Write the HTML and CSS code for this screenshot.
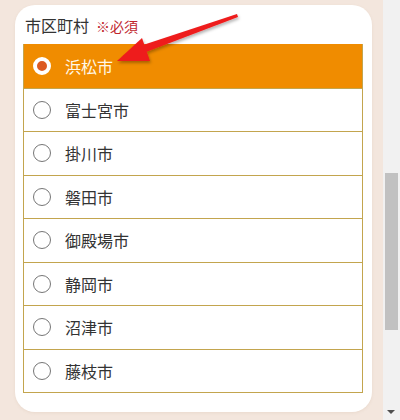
FILE: index.html
```html
<!DOCTYPE html>
<html>
  <head>
    <meta charset="UTF-8">
    <title>市区町村</title>
    <link rel="stylesheet" href="styles.css">
  </head>
  <body>
    <div class="page">
      <div class="main">
        <div class="card">
          <div class="label">市区町村<span class="req">※必須</span></div>
          <ul class="list">
            <li class="item on"><span class="radio"></span>浜松市</li>
            <li class="item"><span class="radio"></span>富士宮市</li>
            <li class="item"><span class="radio"></span>掛川市</li>
            <li class="item"><span class="radio"></span>磐田市</li>
            <li class="item"><span class="radio"></span>御殿場市</li>
            <li class="item"><span class="radio"></span>静岡市</li>
            <li class="item"><span class="radio"></span>沼津市</li>
            <li class="item"><span class="radio"></span>藤枝市</li>
          </ul>
        </div>
      </div>
      <div class="scrollbar">
        <div class="thumb"></div>
        <div class="arrow"></div>
      </div>

      <!-- 注釈の矢印 -->
      <svg class="pointer" width="400" height="420" viewBox="0 0 400 420">
        <defs>
          <filter id="sh" x="-20%" y="-20%" width="140%" height="160%">
            <feDropShadow dx="1" dy="2" stdDeviation="1.5" flood-color="#000" flood-opacity="0.3"/>
          </filter>
        </defs>
        <g filter="url(#sh)" fill="#ee1c1c">
          <polygon points="237,14 238,17 146,52 143,45"/>
          <polygon points="117,61 142,38 150,61"/>
        </g>
      </svg>
    </div>
  </body>
</html>
```

FILE: styles.css
```css
* {
  margin: 0;
  padding: 0;
  box-sizing: border-box;
}

body {
  font-family: "Noto Sans CJK JP", "Liberation Sans", sans-serif;
  color: #333;
}

.page {
  position: relative;
  display: flex;
  width: 400px;
  height: 420px;
  overflow: hidden;
}

.main {
  flex: 1;
  background: #f3e6dd;
  padding: 5px 11px 0 15px;
}

.card {
  height: 407px;
  background: #fff;
  border-radius: 20px;
  padding: 7px 9px 0 8px;
  box-shadow: 0 1px 3px rgba(180, 150, 120, 0.15);
}

.label {
  font-size: 16px;
  line-height: 26px;
  margin-bottom: 5px;
  padding-left: 2px;
  color: #333;
}

.req {
  font-size: 14px;
  color: #c0262d;
  margin-left: 7px;
}

.list {
  list-style: none;
  border: 1px solid #c3a54e;
  border-top: 0;
}

.item {
  display: flex;
  align-items: center;
  height: 43.5px;
  border-top: 1px solid #c3a54e;
  font-size: 16px;
  color: #333;
  padding-left: 9px;
}

.item:first-child {
  border-top-color: #f08c00;
}

.radio {
  width: 18px;
  height: 18px;
  border: 1px solid #767676;
  border-radius: 50%;
  background: #fff;
  margin-right: 14px;
}

.item.on {
  background: #f08c00;
  color: #fff8e8;
}

.item.on .radio {
  border: 4px solid #fff;
  background: #dc5a22;
}

.scrollbar {
  position: relative;
  width: 17px;
  background: #f1f1f1;
}

.thumb {
  margin: 173px 2px 0 2px;
  height: 157px;
  background: #c1c1c1;
}

.arrow {
  position: absolute;
  left: 4px;
  bottom: 6px;
  width: 0;
  height: 0;
  border-left: 4px solid transparent;
  border-right: 4px solid transparent;
  border-top: 4px solid #505050;
}

.pointer {
  position: absolute;
  left: 0;
  top: 0;
}
```
